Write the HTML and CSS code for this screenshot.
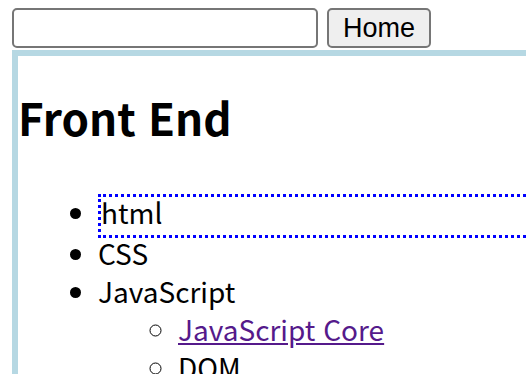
FILE: index.html
```html
<!DOCTYPE html>
<html lang="ko">
<head>
  <meta charset="UTF-8">
  <meta name="viewport" content="width=device-width, initial-scale=1.0">
  <title>Front End</title>
  <link rel="stylesheet" href="styles.css">
</head>
<body>

  <div class="toolbar">
    <input type="text" class="search">
    <button class="home-btn">Home</button>
  </div>

  <div class="frame">
    <h1>Front End</h1>
    <ul>
      <li class="focus">html</li>
      <li>CSS</li>
      <li>JavaScript
        <ul>
          <li><a href="#core">JavaScript Core</a></li>
          <li>DOM</li>
          <li>BOM</li>
        </ul>
      </li>
    </ul>
  </div>

</body>
</html>
```

FILE: styles.css
```css
html { overflow: hidden; }
body {
  margin: 0;
  padding: 8px 12px;
  font-family: 'Noto Sans CJK KR', 'Noto Sans', sans-serif;
  color: #000;
}
.toolbar {
  display: flex;
  gap: 9px;
  height: 40px;
  margin-bottom: 2px;
}
.search {
  width: 306px;
  height: 40px;
  box-sizing: border-box;
  border: 2px solid #767676;
  border-radius: 5px;
  background: #fff;
  margin: 0;
}
.home-btn {
  width: 104px;
  height: 40px;
  box-sizing: border-box;
  border: 2px solid #767676;
  border-radius: 5px;
  background: #efefef;
  font-family: 'Liberation Sans', Arial, sans-serif;
  font-size: 27px;
  color: #000;
  margin: 0;
  padding: 0;
}
.frame {
  width: 640px;
  border-top: 6px solid #b6d8e3;
  border-left: 6px solid #b6d8e3;
}
h1 {
  font-size: 44px;
  font-weight: bold;
  margin: 30px 0 44px 0;
  line-height: 1.45;
}
ul {
  margin: 0;
  padding-left: 80px;
  font-size: 28px;
  line-height: 30px;
}
li { padding-bottom: 8px; }
li > ul { margin-top: 8px; }
ul ul { list-style: circle; }
.focus {
  border: 3px dotted blue;
  border-right: none;
}
a { color: #551a8b; }
```
